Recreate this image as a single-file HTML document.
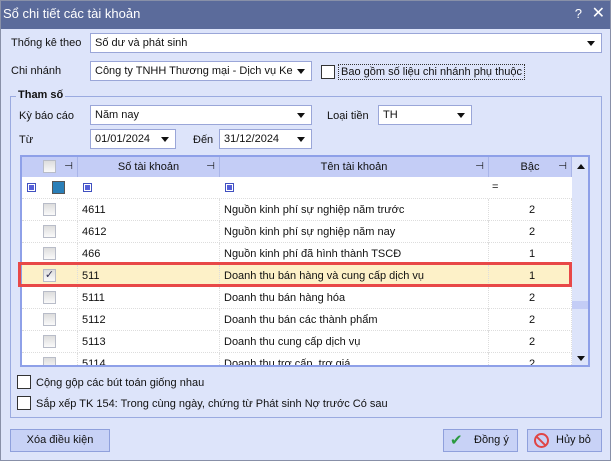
<!DOCTYPE html><html><head><meta charset="utf-8"><style>
*{box-sizing:border-box;margin:0;padding:0}
body{width:611px;height:461px;overflow:hidden;background:#dde4fa;font-family:"Liberation Sans",sans-serif;font-size:11px;color:#111;position:relative}
.a{position:absolute}
.title{left:0;top:0;width:611px;height:29px;background:#5b6b9b;color:#fff;font-size:13px;line-height:27px;padding-left:3px}
.combo{position:absolute;background:#fff;border:1px solid #9aa6d8;height:20px;line-height:18px;padding-left:4px;padding-right:16px;white-space:nowrap;overflow:hidden}
.combo:after{content:"";position:absolute;right:6px;top:7px;border-left:4px solid transparent;border-right:4px solid transparent;border-top:5px solid #111}
.lbl{position:absolute;line-height:14px}
.cb{position:absolute;width:14px;height:14px;border:1px solid #333;background:#fff}
.grid{left:20px;top:155px;width:570px;height:212px;border:2px solid #8ea0e8;background:#fff;overflow:hidden}
.hdr{position:absolute;top:0;height:20px;background:#c4cdf6;border-right:1px solid #a9b5e8;text-align:center;line-height:20px}
.row{position:absolute;left:0;width:550px;height:22px;border-bottom:1px dotted #ddd}
.c{position:absolute;top:0;height:22px;line-height:22px;border-right:1px dotted #ddd;padding-left:4px;white-space:nowrap}
.gcb{position:absolute;left:21px;top:4px;width:13px;height:13px;border:1px solid #b8bcc8;background:linear-gradient(#ddd,#fafafa)}
.pin{position:absolute;right:4px;top:0;font-size:10px}
.btn{position:absolute;background:#c8d2f6;border:1px solid #8fa0dc;height:23px;line-height:21px;text-align:center}
.fs{position:absolute;width:9px;height:9px;border:1px solid #4050c0;background:#fff}
.fs:after{content:"";position:absolute;left:1px;top:1px;width:5px;height:5px;background:#5560d8}
</style></head><body>
<div class="a title">Sổ chi tiết các tài khoản<span style="position:absolute;right:29px">?</span><span style="position:absolute;right:6px;font-size:16px">✕</span></div>
<div class="lbl" style="left:11px;top:36px">Thống kê theo</div>
<div class="combo" style="left:90px;top:33px;width:512px">Số dư và phát sinh</div>
<div class="lbl" style="left:11px;top:64px">Chi nhánh</div>
<div class="combo" style="left:90px;top:61px;width:222px">Công ty TNHH Thương mại - Dịch vụ Ke</div>
<div class="cb" style="left:321px;top:65px"></div>
<div class="lbl" style="left:338px;top:64px;border:1px dotted #333;padding:0 2px">Bao gồm số liệu chi nhánh phụ thuộc</div>
<div class="a" style="left:10px;top:96px;width:592px;height:322px;border:1px solid #9aaae0"></div>
<div class="lbl" style="left:16px;top:88px;background:#dde4fa;font-weight:bold;padding:0 2px">Tham số</div>
<div class="lbl" style="left:19px;top:109px">Kỳ báo cáo</div>
<div class="combo" style="left:90px;top:105px;width:222px">Năm nay</div>
<div class="lbl" style="left:327px;top:109px">Loại tiền</div>
<div class="combo" style="left:378px;top:105px;width:94px">TH</div>
<div class="lbl" style="left:19px;top:133px">Từ</div>
<div class="combo" style="left:90px;top:129px;width:86px">01/01/2024</div>
<div class="lbl" style="left:193px;top:133px">Đến</div>
<div class="combo" style="left:219px;top:129px;width:93px">31/12/2024</div>
<div class="a grid">
<div class="hdr" style="left:0;width:56px"><div class="gcb" style="top:3px"></div><span class="pin">⊣</span></div>
<div class="hdr" style="left:56px;width:142px">Số tài khoản<span class="pin">⊣</span></div>
<div class="hdr" style="left:198px;width:269px">Tên tài khoản<span class="pin">⊣</span></div>
<div class="hdr" style="left:467px;width:83px">Bậc<span class="pin">⊣</span></div>
<div class="a" style="left:550px;top:0;width:18px;height:210px;background:#dde4fa"><div style="position:absolute;left:5px;top:7px;border-left:4px solid transparent;border-right:4px solid transparent;border-bottom:5px solid #111"></div><div style="position:absolute;left:0;top:144px;width:18px;height:8px;background:#c4cdf6"></div><div style="position:absolute;left:5px;top:199px;border-left:4px solid transparent;border-right:4px solid transparent;border-top:5px solid #111"></div></div>
<div class="row" style="top:20px"><div class="fs" style="left:5px;top:6px"></div><div class="a" style="left:30px;top:4px;width:13px;height:13px;border:1px solid #555;background:#2a7fb8"></div><div class="fs" style="left:61px;top:6px"></div><div class="fs" style="left:203px;top:6px"></div><div class="a" style="left:470px;top:4px">=</div></div>
<div class="row" style="top:42px"><div class="c" style="left:0;width:56px"><div class="gcb"></div></div><div class="c" style="left:56px;width:142px">4611</div><div class="c" style="left:198px;width:269px">Nguồn kinh phí sự nghiệp năm trước</div><div class="c" style="left:467px;width:83px;text-align:center">2</div></div>
<div class="row" style="top:64px"><div class="c" style="left:0;width:56px"><div class="gcb"></div></div><div class="c" style="left:56px;width:142px">4612</div><div class="c" style="left:198px;width:269px">Nguồn kinh phí sự nghiệp năm nay</div><div class="c" style="left:467px;width:83px;text-align:center">2</div></div>
<div class="row" style="top:86px"><div class="c" style="left:0;width:56px"><div class="gcb"></div></div><div class="c" style="left:56px;width:142px">466</div><div class="c" style="left:198px;width:269px">Nguồn kinh phí đã hình thành TSCĐ</div><div class="c" style="left:467px;width:83px;text-align:center">1</div></div>
<div class="row" style="top:108px;background:#fdf1c8"><div class="c" style="left:0;width:56px"><div class="gcb" style="font-size:11px;line-height:11px;color:#335;text-align:center">✓</div></div><div class="c" style="left:56px;width:142px">511</div><div class="c" style="left:198px;width:269px">Doanh thu bán hàng và cung cấp dịch vụ</div><div class="c" style="left:467px;width:83px;text-align:center">1</div></div>
<div class="row" style="top:130px"><div class="c" style="left:0;width:56px"><div class="gcb"></div></div><div class="c" style="left:56px;width:142px">5111</div><div class="c" style="left:198px;width:269px">Doanh thu bán hàng hóa</div><div class="c" style="left:467px;width:83px;text-align:center">2</div></div>
<div class="row" style="top:152px"><div class="c" style="left:0;width:56px"><div class="gcb"></div></div><div class="c" style="left:56px;width:142px">5112</div><div class="c" style="left:198px;width:269px">Doanh thu bán các thành phẩm</div><div class="c" style="left:467px;width:83px;text-align:center">2</div></div>
<div class="row" style="top:174px"><div class="c" style="left:0;width:56px"><div class="gcb"></div></div><div class="c" style="left:56px;width:142px">5113</div><div class="c" style="left:198px;width:269px">Doanh thu cung cấp dịch vụ</div><div class="c" style="left:467px;width:83px;text-align:center">2</div></div>
<div class="row" style="top:196px"><div class="c" style="left:0;width:56px"><div class="gcb"></div></div><div class="c" style="left:56px;width:142px">5114</div><div class="c" style="left:198px;width:269px">Doanh thu trợ cấp, trợ giá</div><div class="c" style="left:467px;width:83px;text-align:center">2</div></div>
</div>
<div class="a" style="left:18px;top:262px;width:554px;height:25px;border:3px solid #e84848"></div>
<div class="cb" style="left:17px;top:375px"></div><div class="lbl" style="left:36px;top:376px">Cộng gộp các bút toán giống nhau</div>
<div class="cb" style="left:17px;top:396px"></div><div class="lbl" style="left:36px;top:397px">Sắp xếp TK 154: Trong cùng ngày, chứng từ Phát sinh Nợ trước Có sau</div>
<div class="btn" style="left:10px;top:429px;width:100px">Xóa điều kiện</div>
<div class="btn" style="left:443px;top:429px;width:75px"><span style="color:#2a9a40;font-size:15px;position:absolute;left:6px">✔</span><span style="position:absolute;left:30px">Đồng ý</span></div>
<div class="btn" style="left:527px;top:429px;width:75px"><span style="position:absolute;left:6px;top:3px;width:15px;height:15px;border:2px solid #e04545;border-radius:50%"><span style="position:absolute;left:4px;top:-1px;width:2px;height:14px;background:#e04545;transform:rotate(-45deg)"></span></span><span style="position:absolute;left:28px">Hủy bỏ</span></div>
<div class="a" style="left:0;top:0;width:611px;height:461px;border:1px solid #8890a8;pointer-events:none"></div>
</body></html>
